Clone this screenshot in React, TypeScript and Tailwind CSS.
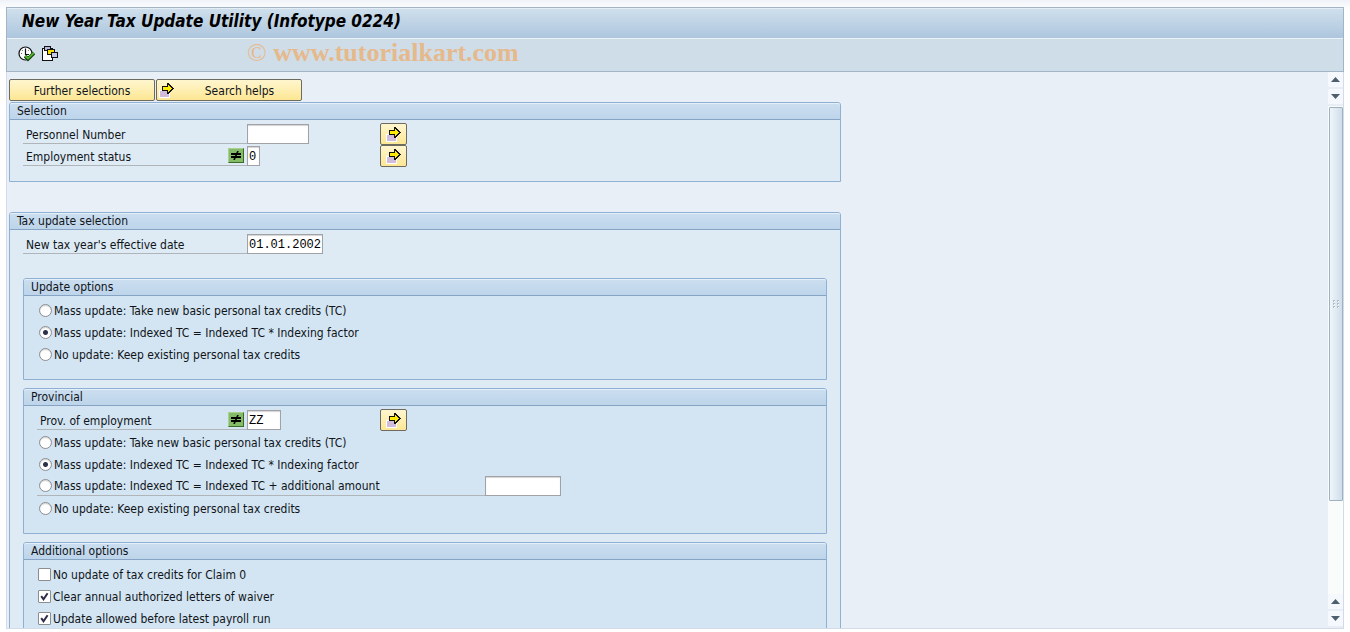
import React, { useId, useState } from "react";

const FONT = "font-['DejaVu_Sans_Condensed','DejaVu_Sans',sans-serif]";

function ExecuteIcon() {
  return (
    <svg width="17" height="16" viewBox="0 0 17 16" aria-hidden="true">
      <circle cx="7.5" cy="7.5" r="6.5" fill="#fff" stroke="#111" strokeWidth="1.2" />
      <path d="M7.5 2.5V8.5H11" fill="none" stroke="#111" strokeWidth="1.2" />
      <path d="M3 7.5h1M7.5 12v1M4 4l.8.8M11 4l-.8.8" stroke="#667" strokeWidth="1" />
      <path d="M7 10l3 3 6-6" fill="none" stroke="#16400c" strokeWidth="3.6" />
      <path d="M7.4 10l2.6 2.6 5.6-5.6" fill="none" stroke="#4fb52c" strokeWidth="1.8" />
    </svg>
  );
}

function VariantIcon() {
  return (
    <svg width="16" height="16" viewBox="0 0 16 16" shapeRendering="crispEdges" aria-hidden="true">
      <path d="M0 2h11v13H0z" fill="#111" />
      <path d="M1 3h9v11H1z" fill="#fff" />
      <path d="M2 0h7v5H2z" fill="#111" />
      <path d="M3 1h5v3H3z" fill="#b9b9dc" />
      <path d="M5 3h8v6H5z" fill="#111" />
      <path d="M6 4h6v4H6z" fill="#f7e000" />
      <path d="M9 6h7v6H9z" fill="#111" />
      <path d="M10 7h5v4h-5z" fill="#c8c8e6" />
    </svg>
  );
}

function ArrowIcon() {
  return (
    <svg width="15" height="15" viewBox="0 0 15 15" className="shrink-0" shapeRendering="crispEdges" aria-hidden="true">
      <path d="M0 7h11v8H0z" fill="#fff" />
      <path d="M1 8h9v6H1z" fill="#d2bcdc" />
      <path d="M3 3h5V0h2v1h1v1h1v1h1v1h1v1h1v1h-1v1h-1v1h-1v1h-1v1h-1v1H8V8H3z" fill="#111" />
      <path d="M4 4h5V2h1v1h1v1h1v1h1v1h-1v1h-1v1h-1v1H9V7H4z" fill="#ffeb00" />
    </svg>
  );
}

function NotEqual() {
  return (
    <button
      type="button"
      aria-label="Exclude value"
      className="flex h-[15px] w-4 shrink-0 items-center justify-center border border-t-[#a9cf91] border-l-[#a9cf91] border-r-[#3c6b25] border-b-[#3c6b25] bg-[#84bb67]"
    >
      <svg width="10" height="9" viewBox="0 0 10 9" aria-hidden="true">
        <path d="M0 3h10M0 6h10" stroke="#000" strokeWidth="1.8" />
        <path d="M7 0L3 9" stroke="#000" strokeWidth="1.6" />
      </svg>
    </button>
  );
}

function MoreButton() {
  return (
    <button
      type="button"
      aria-label="Multiple selection"
      className="flex h-[22px] w-[27px] shrink-0 items-center justify-center rounded-[2px] border border-[#6d6b60] bg-linear-to-b from-[#fff6cf] to-[#fde793]"
    >
      <ArrowIcon />
    </button>
  );
}

function Group({ title, inner, className, children }: { title: string; inner?: boolean; className?: string; children: React.ReactNode }) {
  return (
    <section className={`rounded-t-[3px] border border-[#8fb0d2] ${inner ? "bg-[#d3e5f3]" : "bg-[#deebf5]"} ${className ?? ""}`}>
      <h2 className="h-[17px] rounded-t-[2px] border-t border-b border-t-[#e4f0f9] border-b-[#86a5c4] bg-linear-to-b from-[#cbdef0] to-[#bdd4ea] px-[7px] leading-[15px] whitespace-nowrap">
        {title}
      </h2>
      {children}
    </section>
  );
}

function Field({ label, value, labelWidth, inputWidth, exclude, more }: { label: string; value: string; labelWidth: string; inputWidth: string; exclude?: boolean; more?: boolean }) {
  const id = useId();
  const [text, setText] = useState(value);
  return (
    <div className="flex h-[22px] items-center">
      <div className={`flex h-5 shrink-0 items-center justify-between border-b border-[#b0b5ba] pr-[3px] pl-[3px] ${labelWidth}`}>
        <label htmlFor={id} className="pt-[2px] whitespace-nowrap">{label}</label>
        {exclude && <NotEqual />}
      </div>
      <div className="flex w-[133px] shrink-0">
        <TextBox id={id} value={text} onChange={setText} className={inputWidth} />
      </div>
      {more && <MoreButton />}
    </div>
  );
}

function TextBox({ id, label, value, onChange, className }: { id?: string; label?: string; value: string; onChange: (v: string) => void; className: string }) {
  return (
    <input
      id={id}
      aria-label={label}
      type="text"
      value={value}
      onChange={(e) => onChange(e.target.value)}
      className={`h-5 border border-[#a0a2a6] bg-white pt-px pl-px font-['Liberation_Mono',monospace] text-[12px] text-black shadow-[inset_0_1px_1px_#d4d4d8] outline-none ${className}`}
    />
  );
}

function Radio({ name, label, checked }: { name: string; label: string; checked?: boolean }) {
  return (
    <label className="flex h-[22px] items-center gap-[2px] pl-[2px] whitespace-nowrap">
      <input
        type="radio"
        name={name}
        defaultChecked={checked}
        className="size-[13px] shrink-0 appearance-none rounded-full border border-[#8b8d91] bg-white shadow-[inset_0_1px_1px_#d0d0d0] checked:bg-[radial-gradient(circle,#2c3247_0_2px,#fff_3px)]"
      />
      <span className="pt-px">{label}</span>
    </label>
  );
}

function Check({ label, checked }: { label: string; checked?: boolean }) {
  return (
    <label className="flex h-[22px] items-center gap-[2px] pl-px whitespace-nowrap">
      <span className="grid size-[13px] shrink-0">
        <input
          type="checkbox"
          defaultChecked={checked}
          className="peer col-start-1 row-start-1 size-[13px] appearance-none rounded-[1px] border border-[#8b8d91] bg-white"
        />
        <svg viewBox="0 0 13 13" className="pointer-events-none col-start-1 row-start-1 size-[13px] opacity-0 peer-checked:opacity-100" aria-hidden="true">
          <path d="M3.2 6.2L5.5 9.2L9.6 3.2" fill="none" stroke="#2c2c48" strokeWidth="2" />
        </svg>
      </span>
      <span className="pt-px">{label}</span>
    </label>
  );
}

function ScrollArrow({ down }: { down?: boolean }) {
  return (
    <button
      type="button"
      aria-label={down ? "Scroll down" : "Scroll up"}
      className="flex h-[17px] w-full shrink-0 items-center justify-center border-b-2 border-[#e9edf5] bg-[#f5f8fc]"
    >
      <svg width="9" height="5" viewBox="0 0 9 5" aria-hidden="true">
        <path d={down ? "M0 0h9L4.5 5z" : "M0 5h9L4.5 0z"} fill="#4d5e6e" />
      </svg>
    </button>
  );
}

function ScrollBar() {
  return (
    <div className="flex w-[15px] shrink-0 flex-col bg-[#fafcfb]">
      <ScrollArrow />
      <ScrollArrow down />
      <div className="min-h-0 flex-1 pt-px pl-px">
        <div className="flex h-[81%] items-center justify-center rounded-[1px] border border-[#9fb0c0] bg-linear-to-r from-[#f0f5f9] to-[#cfdeea]">
          <svg width="6" height="8" viewBox="0 0 6 8" shapeRendering="crispEdges" aria-hidden="true">
            <path d="M0 0h2v2H0zM4 0h2v2H4zM0 3h2v2H0zM4 3h2v2H4zM0 6h2v2H0zM4 6h2v2H4z" fill="#fff" />
            <path d="M0 0h2v1H1v1H0zM4 0h2v1H5v1H4zM0 3h2v1H1v1H0zM4 3h2v1H5v1H4zM0 6h2v1H1v1H0zM4 6h2v1H5v1H4z" fill="#aebccb" />
          </svg>
        </div>
      </div>
      <ScrollArrow />
      <ScrollArrow down />
    </div>
  );
}

export default function App() {
  const [amount, setAmount] = useState("");
  const wide = "w-[224px]";
  return (
    <div className={`flex h-screen flex-col overflow-hidden bg-linear-to-b from-[#eff3f9] to-white to-[10px] px-[6px] pt-[7px] pb-[3px] text-[12px] text-[#101418] ${FONT}`}>
      <header className="border border-[#a3b4c6]">
        <h1 className="h-[30px] truncate border-t border-[#e2edf6] bg-linear-to-b from-[#cfdfec] to-[#adc6de] pl-[15px] text-[17px] leading-[24px] font-bold text-black italic">
          New Year Tax Update Utility (Infotype 0224)
        </h1>
        <div className="flex h-[33px] items-center border-t border-[#eaf2f8] bg-[#cfdde8] pb-[3px] pl-[11px]">
          <button type="button" aria-label="Execute" className="mr-[7px]"><ExecuteIcon /></button>
          <button type="button" aria-label="Get variant"><VariantIcon /></button>
          <p className="ml-[189px] pb-[2px] font-['Liberation_Serif',serif] text-[26px] leading-7 font-bold whitespace-nowrap text-[#e6b98c]">
            <span className="font-normal">©</span> www.tutorialkart.com
          </p>
        </div>
      </header>

      <div className="flex min-h-0 flex-1 border-x border-b border-[#d3dbe8] bg-[#e8eff7]">
        <main className="min-w-0 flex-1 overflow-hidden pt-[7px] pl-[2px]">
          <div className="mb-px flex gap-px">
            <button type="button" className="h-[22px] w-[146px] rounded-[2px] border border-[#6d6b60] bg-linear-to-b from-[#fff6cf] to-[#fde793] pt-px">
              Further selections
            </button>
            <button type="button" className="flex h-[22px] w-[146px] items-center rounded-[2px] border border-[#6d6b60] bg-linear-to-b from-[#fff6cf] to-[#fde793] pl-[2px]">
              <ArrowIcon />
              <span className="flex-1 pt-px pl-1 text-center">Search helps</span>
            </button>
          </div>

          <Group title="Selection" className="mb-[30px] w-[832px] pb-[14px]">
            <div className="px-[13px] pt-[3px]">
              <Field label="Personnel Number" value="" labelWidth={wide} inputWidth="w-[62px]" more />
              <Field label="Employment status" value="0" labelWidth={wide} inputWidth="w-[13px]" exclude more />
            </div>
          </Group>

          <Group title="Tax update selection" className="w-[832px] pb-[14px]">
            <div className="flex flex-col px-[13px] pt-[3px]">
              <Field label="New tax year's effective date" value="01.01.2002" labelWidth={wide} inputWidth="w-[76px]" />

              <Group title="Update options" inner className="mt-[23px] mb-2 pb-[14px]">
                <div className="px-[13px] pt-[3px]">
                  <Radio name="federal" label="Mass update: Take new basic personal tax credits (TC)" />
                  <Radio name="federal" label="Mass update: Indexed TC = Indexed TC * Indexing factor" checked />
                  <Radio name="federal" label="No update: Keep existing personal tax credits" />
                </div>
              </Group>

              <Group title="Provincial" inner className="mb-2 pb-[14px]">
                <div className="px-[13px] pt-[3px]">
                  <Field label="Prov. of employment" value="ZZ" labelWidth="w-[210px]" inputWidth="w-[34px]" exclude more />
                  <Radio name="provincial" label="Mass update: Take new basic personal tax credits (TC)" />
                  <Radio name="provincial" label="Mass update: Indexed TC = Indexed TC * Indexing factor" checked />
                  <div className="flex h-[22px] items-center">
                    <div className="flex h-5 w-[448px] items-center border-b border-[#b0b5ba]">
                      <Radio name="provincial" label="Mass update: Indexed TC = Indexed TC + additional amount" />
                    </div>
                    <TextBox label="Additional amount" value={amount} onChange={setAmount} className="w-[76px]" />
                  </div>
                  <Radio name="provincial" label="No update: Keep existing personal tax credits" />
                </div>
              </Group>

              <Group title="Additional options" inner className="pb-[14px]">
                <div className="px-[13px] pt-[3px]">
                  <Check label="No update of tax credits for Claim 0" />
                  <Check label="Clear annual authorized letters of waiver" checked />
                  <Check label="Update allowed before latest payroll run" checked />
                </div>
              </Group>
            </div>
          </Group>
        </main>
        <ScrollBar />
      </div>
    </div>
  );
}
